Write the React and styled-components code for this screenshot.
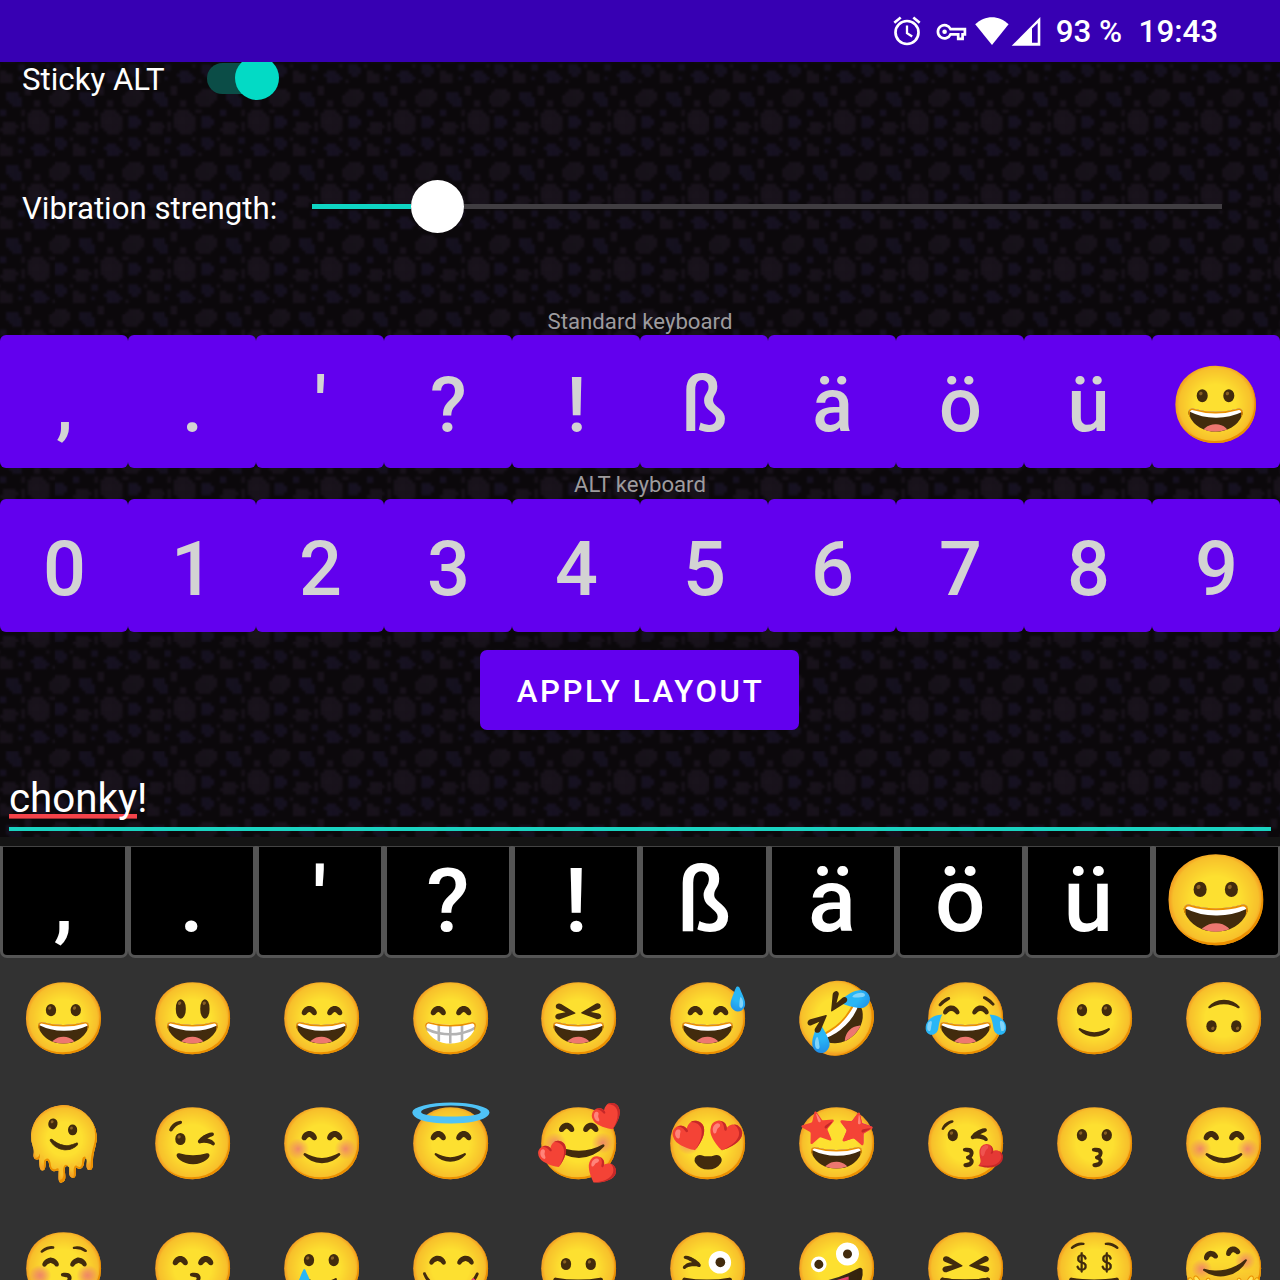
import React from "react";
import styled, { createGlobalStyle } from "styled-components";

/* ---------- rock texture: one repeating pixel-art tile ---------- */

const GRID = 24;
const TILE = 73.33;

// [centre x, centre y, radius x, radius y, rotation in degrees, colour index]
const ROCKS = [
  [12.5, 12, 3.5, 4.4, -10, 0],
  [19.8, 12, 1.9, 2.5, 0, 1],
  [3, 14, 2.8, 2.1, -20, 0],
  [19.5, 4, 3.6, 2.9, -35, 0],
  [4.6, 4.4, 2, 3, -35, 1],
  [9, 1.5, 1.2, 1.2, 0, 0],
  [12, 6, 1.2, 1.2, 0, 0],
  [7, 18, 1.2, 1.2, 0, 1],
  [13, 21.2, 2.8, 2, 30, 1],
  [19.6, 18.7, 2.2, 1.8, 35, 1],
  [2, 21.4, 2.6, 1.9, 30, 0],
  [17, 8.5, 1.1, 0.8, 0, 0],
  [1, 9, 1.1, 1.1, 0, 1],
  [6.5, 21.5, 0.7, 0.7, 0, 1],
  [7.5, 9, 1.2, 0.8, 0, 0],
  [15.5, 17.5, 0.7, 0.7, 0, 0],
  [23.5, 17.5, 0.7, 0.7, 0, 0],
  [17.5, 22.5, 0.7, 0.7, 0, 0],
  [7.5, 13.5, 0.7, 1.1, 0, 0],
];
const ROCK_COLOURS = ["#19131c", "#171222"];

function buildTile() {
  let rects = "";
  for (let y = -2; y < GRID + 2; y++) {
    for (let x = -2; x < GRID + 2; x++) {
      const rock = ROCKS.find(([cx, cy, rx, ry, angle]) => {
        const wrap = (d) => d - GRID * Math.round(d / GRID);
        const dx = wrap(x + 0.5 - cx);
        const dy = wrap(y + 0.5 - cy);
        const a = (angle * Math.PI) / 180;
        const u = dx * Math.cos(a) + dy * Math.sin(a);
        const v = dy * Math.cos(a) - dx * Math.sin(a);
        return (u / rx) ** 2 + (v / ry) ** 2 <= 1;
      });
      if (rock) {
        rects += `<rect x='${x}' y='${y}' width='1.03' height='1.03' fill='${ROCK_COLOURS[rock[5]]}'/>`;
      }
    }
  }
  const svg = `<svg xmlns='http://www.w3.org/2000/svg' width='${TILE}' height='${TILE}' viewBox='0 0 ${GRID} ${GRID}'><filter id='s' filterUnits='userSpaceOnUse' x='-3' y='-3' width='30' height='30' color-interpolation-filters='sRGB'><feGaussianBlur stdDeviation='0.4'/></filter><rect width='24' height='24' fill='#0b080b'/><g filter='url(#s)'>${rects}</g></svg>`;
  return `url("data:image/svg+xml,${encodeURIComponent(svg).replace(/'/g, "%27").replace(/\(/g, "%28").replace(/\)/g, "%29")}")`;
}

const rockTexture = buildTile();

/* ---------- styles ---------- */

const GlobalStyle = createGlobalStyle`
  *, *::before, *::after { box-sizing: border-box; }
  body {
    margin: 0;
    background: #141414;
    color: #fff;
    font-family: Roboto, "Noto Color Emoji", sans-serif;
  }
`;

const Screen = styled.div`
  width: 1280px;
  height: 1280px;
  overflow: hidden;
  display: flex;
  flex-direction: column;
`;

const StatusBar = styled.header`
  height: 62px;
  flex: none;
  display: flex;
  align-items: center;
  justify-content: flex-end;
  padding: 2px 62px 0 0;
  background: #3700b3;
  font-size: 31.3px;
  font-weight: 500;
  line-height: 36px;
  white-space: nowrap;
`;

const StatusIcons = styled.svg`
  width: 150px;
  height: 36px;
  margin: -1px 14px 0 0;
  flex: none;
`;

const Clock = styled.time`
  margin-left: 16.5px;
`;

const Settings = styled.main`
  height: 775px;
  flex: none;
  display: flex;
  flex-direction: column;
  overflow: hidden;
  background: #0b080b ${rockTexture} 0 23.6px / ${TILE}px ${TILE}px;
`;

const SettingRow = styled.label`
  display: flex;
  align-items: center;
  flex: none;
  height: ${(p) => p.$height}px;
  padding: ${(p) => p.$top || 0}px 0 0 22px;
  font-size: 31.2px;
  line-height: 36px;
  white-space: nowrap;
`;

const SettingName = styled.span`
  padding-top: 2px;
`;

const SwitchTrack = styled.span`
  display: flex;
  align-items: center;
  justify-content: flex-end;
  width: 72px;
  height: 31px;
  margin: -1px 0 0 42px;
  border-radius: 16px;
  background: linear-gradient(90deg, #0b4d47 0 48px, transparent 48px);
`;

const SwitchThumb = styled.span`
  flex: none;
  width: 44px;
  height: 44px;
  border-radius: 50%;
  background: #03dac5;
`;

const Slider = styled.span`
  display: flex;
  align-items: center;
  width: 910px;
  height: 54px;
  margin: -3px 0 0 35px;
`;

const SliderLine = styled.span`
  height: 4.6px;
  flex: ${(p) => (p.$active ? "0 0 98.6px" : "1")};
  background: ${(p) => (p.$active ? "#0fd5c3" : "#403d41")};
`;

const SliderThumb = styled.span`
  flex: none;
  width: 53.4px;
  height: 53.4px;
  border-radius: 50%;
  background: #fff;
`;

const Caption = styled.div`
  flex: none;
  height: ${(p) => p.$height}px;
  padding-top: ${(p) => p.$top}px;
  text-align: center;
  font-size: 22.2px;
  line-height: 26px;
  color: #9d9b9e;
`;

const LayoutRow = styled.div`
  display: grid;
  grid-template-columns: repeat(10, 1fr);
  flex: none;
  height: 133px;
`;

const LayoutKey = styled.button`
  display: flex;
  align-items: center;
  justify-content: center;
  border: 0;
  border-radius: 6px;
  padding: 8.8px 0 0 1px;
  background: #6200ee;
  color: #d3d3d3;
  font: 500 75.6px/88px Roboto, "Noto Color Emoji", sans-serif;
`;

const ApplyButton = styled.button`
  flex: none;
  align-self: center;
  width: 319px;
  height: 80px;
  margin: 18.8px 1px 0 0;
  border: 0;
  border-radius: 7px;
  padding: 3px 0 0 2px;
  background: #6200ee;
  color: #fff;
  font: 500 31.2px/36px Roboto, sans-serif;
  letter-spacing: 2.65px;
`;

const TextField = styled.div`
  flex: none;
  height: 62px;
  margin: 38.7px 9px 0;
  padding-top: 6px;
  border-bottom: 4.6px solid #1ad3c1;
  font-size: 40.3px;
  line-height: 48px;
`;

const Misspelled = styled.span`
  display: inline-block;
  height: 50px;
  background: linear-gradient(#f4434a, #f4434a) 0 39.5px / 100% 4.6px no-repeat;
`;

const QuickKeys = styled.div`
  display: grid;
  grid-template-columns: repeat(10, 128.1px);
  flex: none;
  height: 121px;
  margin-top: auto;
  padding-top: 9px;
  background: linear-gradient(#141414 0 9px, #323232 9px);
`;

const QuickKey = styled.button`
  display: flex;
  align-items: center;
  justify-content: center;
  border: 3px solid #555;
  border-top: 1px solid #444;
  border-radius: 0 0 7px 7px;
  padding: 0 1px 1px 0;
  background: #000;
  color: #fff;
  font: 500 89px/104px Roboto, "Noto Color Emoji", sans-serif;
`;

const EmojiPanel = styled.section`
  display: grid;
  grid-template-columns: repeat(10, 128.95px);
  grid-auto-rows: 124.7px;
  flex: none;
  height: 322px;
  overflow: hidden;
  background: #323232;
`;

const EmojiCell = styled.span`
  display: flex;
  align-items: center;
  justify-content: center;
  padding: 0 1px 2px 0;
  font: 70.5px/84px "Noto Color Emoji", sans-serif;
`;

/* ---------- data ---------- */

const STANDARD_KEYS = [",", ".", "'", "?", "!", "ß", "ä", "ö", "ü", "😀"];
const ALT_KEYS = ["0", "1", "2", "3", "4", "5", "6", "7", "8", "9"];
const EMOJIS = [
  "😀", "😃", "😄", "😁", "😆", "😅", "🤣", "😂", "🙂", "🙃",
  "🫠", "😉", "😊", "😇", "🥰", "😍", "🤩", "😘", "😗", "😊",
  "😚", "😙", "🥲", "😋", "😛", "😜", "🤪", "😝", "🤑", "🤗",
];

/* ---------- components ---------- */

function IndicatorIcons() {
  return (
    <StatusIcons viewBox="892 13 150 36" fill="none" aria-hidden="true">
      {/* alarm */}
      <g stroke="#fff" strokeWidth="2.7">
        <circle cx="907" cy="31.5" r="11.5" />
        <path d="M907 24.500v7.600l5.200 3.400" strokeWidth="2.3" />
        <path d="M894.300 21.700l6.400-5.200M919.700 21.700l-6.400-5.200" />
      </g>
      {/* VPN key */}
      <g stroke="#fff" strokeWidth="2.7">
        <path d="M950.600 28.200a6.600 6.600 0 1 0 0 5.100h7.600v4.600h4.400v-4.600h2.300v-5.100z" />
        <circle cx="944.6" cy="30.7" r="2.3" fill="#fff" stroke="none" />
      </g>
      {/* Wi-Fi */}
      <path d="M975.200 23.200C985 13.800 999 13.800 1008.600 23.200L992 44z" fill="#fff" />
      {/* signal */}
      <path d="M1040.300 16v28.700h-28.600z" fill="#fff" />
      <path d="M1032 27.500l5.700-5.600v19.800h-5.700z" fill="#3700b3" />
    </StatusIcons>
  );
}

export default function App() {
  return (
    <>
      <GlobalStyle />
      <Screen>
        <StatusBar>
          <IndicatorIcons />
          <span>93 %</span>
          <Clock>19:43</Clock>
        </StatusBar>

        <Settings>
          <SettingRow $height={33}>
            <SettingName>Sticky ALT</SettingName>
            <SwitchTrack>
              <SwitchThumb />
            </SwitchTrack>
          </SettingRow>
          <SettingRow $height={213} $top={13}>
            <SettingName>Vibration strength:</SettingName>
            <Slider>
              <SliderLine $active />
              <SliderThumb />
              <SliderLine />
            </Slider>
          </SettingRow>

          <Caption $height={26.5} $top={0.4}>Standard keyboard</Caption>
          <LayoutRow>
            {STANDARD_KEYS.map((k) => (
              <LayoutKey key={k}>{k}</LayoutKey>
            ))}
          </LayoutRow>
          <Caption $height={31} $top={3.4}>ALT keyboard</Caption>
          <LayoutRow>
            {ALT_KEYS.map((k) => (
              <LayoutKey key={k}>{k}</LayoutKey>
            ))}
          </LayoutRow>

          <ApplyButton>APPLY LAYOUT</ApplyButton>

          <TextField>
            <Misspelled>chonky</Misspelled>!
          </TextField>
        </Settings>

        <QuickKeys>
          {STANDARD_KEYS.map((k) => (
            <QuickKey key={k}>{k}</QuickKey>
          ))}
        </QuickKeys>
        <EmojiPanel>
          {EMOJIS.map((e, i) => (
            <EmojiCell key={i}>{e}</EmojiCell>
          ))}
        </EmojiPanel>
      </Screen>
    </>
  );
}
